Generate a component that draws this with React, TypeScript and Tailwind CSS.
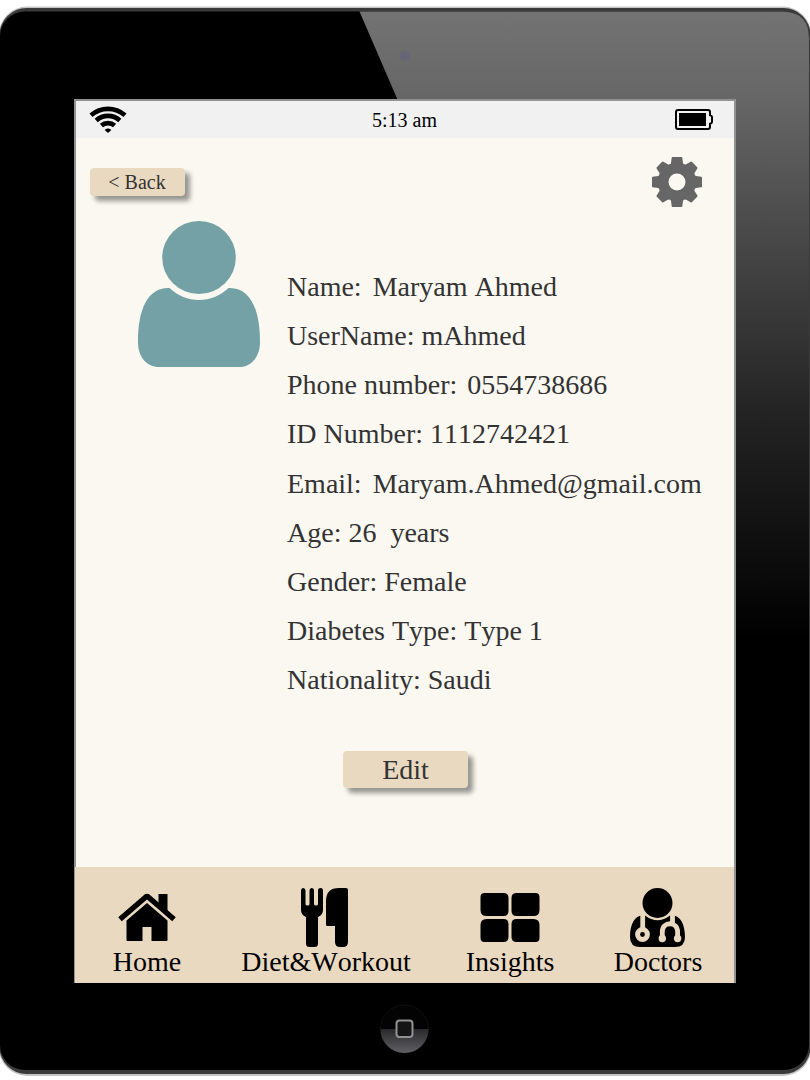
import type { ReactNode } from "react";

const details: [string, string, string][] = [
  ["Name:", "Maryam Ahmed", "ml-[11px]"],
  ["UserName:", "mAhmed", "ml-[7px]"],
  ["Phone number:", "0554738686", "ml-[10px]"],
  ["ID Number:", "1112742421", "ml-[7px]"],
  ["Email:", "Maryam.Ahmed@gmail.com", "ml-[11px]"],
  ["Age:", "26  years", "ml-[7px]"],
  ["Gender:", "Female", "ml-[7px]"],
  ["Diabetes Type:", "Type 1", "ml-[7px]"],
  ["Nationality:", "Saudi", "ml-[7px]"],
];

function WifiIcon() {
  return (
    <svg className="h-[27px] w-[38px]" viewBox="0 0 38 27" fill="none" stroke="#000" strokeWidth="4.7">
      <path d="M2 9.200C11.800.7 26.200.7 36 9.200" />
      <path d="M7.200 14.400C14 8.400 24 8.400 30.800 14.400" />
      <path d="M12.400 19.600C16.100 16.300 21.900 16.300 25.600 19.600" />
      <path d="M19 27l-3.300-2.900c1.900-2 4.700-2 6.600 0z" fill="#000" stroke="none" />
    </svg>
  );
}

function BatteryIcon() {
  return (
    <svg className="h-[21px] w-[38px]" viewBox="0 0 38 21">
      <path
        d="M3 1H33Q35 1 35 3V6.2Q37 6.6 37 8V13Q37 14.4 35 14.8V18Q35 20 33 20H3Q1 20 1 18V3Q1 1 3 1Z"
        fill="none"
        stroke="#000"
        strokeWidth="2"
      />
      <path d="M4 4h27v13H4z" />
    </svg>
  );
}

function GearIcon() {
  const angles = [0, 45, 90, 135, 180, 225, 270, 315];
  return (
    <svg className="h-[50px] w-[50px]" viewBox="-25 -25 50 50" fill="#666">
      {angles.map((a) => (
        <path
          key={a}
          transform={`rotate(${a})`}
          d={
            a % 90 === 0
              ? "M-4.4-25H4.4Q5.200-25 5.300-24.200L6-19Q6.300-18 7.500-17.300L6-12H-6L-7.500-17.300Q-6.300-18-6-19L-5.300-24.200Q-5.200-25-4.400-25Z"
              : "M-3.800-24.800H3.800Q4.500-24.800 4.800-24L6-19Q6.300-18 7.500-17.300L6-12H-6L-7.500-17.300Q-6.300-18-6-19L-4.800-24Q-4.500-24.800-3.800-24.800Z"
          }
        />
      ))}
      <circle r="13.6" fill="none" stroke="#666" strokeWidth="10.2" />
    </svg>
  );
}

function AvatarIcon() {
  return (
    <svg className="h-[146px] w-[122px]" viewBox="138 221 122 146" fill="#73a1a5">
      <ellipse cx="199" cy="257.5" rx="36.8" ry="36.5" />
      <path d="M169.5 288C178 296 188 300 199 300S220 296 228.500 288C249 287 260 307 260 342C260 357 251 367 239 367H159C147 367 138 357 138 342C138 307 149 287 169.500 288Z" />
    </svg>
  );
}

function HomeIcon() {
  return (
    <svg className="h-[60px] w-[60px]" viewBox="117.500 888 60 60">
      <path
        d="M120.500 919.200L146 897.200Q147.500 896 149 897.200L174.500 919.200"
        fill="none"
        stroke="#000"
        strokeWidth="5.400"
        strokeLinejoin="round"
      />
      <path d="M159 894H168V912L159 904Z" />
      <path d="M127 920.500L147.500 903L168 920.500V940Q168 941 167 941H152V927H143V941H128Q127 941 127 940Z" />
    </svg>
  );
}

function DietIcon() {
  return (
    <svg className="h-[60px] w-[50px]" viewBox="301 888 50 60">
      <path d="M301 890.500Q301 888 303.200 888T305.500 890.500V904Q305.500 905.500 307.500 905.500T309.500 904V890.500Q309.500 888 311.800 888T314 890.500V904Q314 905.500 316 905.500T318 904V890.500Q318 888 320.500 888T323 890.500V910Q323 915 318 917V943.500Q318 947 314.500 947H309.500Q306 947 306 943.500V917Q301 915 301 910Z" />
      <path d="M326 901Q326 888 339 888H346Q348 888 348 890V942Q348 947 343 947H340Q335 947 335 942V926H327.500Q326 926 326 924.500Z" />
    </svg>
  );
}

function InsightsIcon() {
  return (
    <svg className="h-[60px] w-[60px]" viewBox="480.500 888 60 60">
      <path d="M485 893H504Q509 893 509 898V911Q509 916 504 916H487Q481 916 481 910V897Q481 893 485 893ZM517 893H536Q540 893 540 897V910Q540 916 534 916H517Q512 916 512 911V898Q512 893 517 893ZM487 919H504Q509 919 509 924V937Q509 942 504 942H485Q481 942 481 938V925Q481 919 487 919ZM517 919H534Q540 919 540 925V938Q540 942 536 942H517Q512 942 512 937V924Q512 919 517 919Z" />
    </svg>
  );
}

function DoctorsIcon() {
  return (
    <svg className="h-[60px] w-[60px]" viewBox="628 888 60 60">
      <circle cx="657.500" cy="903" r="15" />
      <path d="M645 915.500Q657.500 925 670 915.500C680 914 685 924 685 937Q685 947 675 947H640Q630 947 630 937C630 924 635 914 645 915.500Z" />
      <g fill="none" stroke="#ead9c1">
        <path d="M642.700 914V928" strokeWidth="4.800" />
        <circle cx="642.500" cy="934.500" r="4.900" strokeWidth="5" />
        <path d="M672.500 913V923M662.300 938V932C662.300 921 677.600 921 677.600 932V938" strokeWidth="4.800" />
      </g>
      <circle cx="662.300" cy="938.500" r="3.700" fill="#ead9c1" />
      <circle cx="677.600" cy="938.500" r="3.700" fill="#ead9c1" />
    </svg>
  );
}

function NavItem({ label, className, children }: { label: string; className: string; children: ReactNode }) {
  return (
    <button className={`flex shrink-0 flex-col items-center text-[28px] leading-[28px] text-black ${className}`}>
      {children}
      <span className="whitespace-nowrap">{label}</span>
    </button>
  );
}

function Bezel() {
  return (
    <svg className="absolute inset-0 h-[1080px] w-[810px]" viewBox="0 0 810 1080">
      <defs>
        <linearGradient id="glare" gradientUnits="userSpaceOnUse" x1="0" y1="10" x2="0" y2="640">
          <stop offset="0" stopColor="#737373" />
          <stop offset="0.14" stopColor="#666" />
          <stop offset="0.34" stopColor="#4b4b4b" />
          <stop offset="0.65" stopColor="#222" />
          <stop offset="1" stopColor="#000" />
        </linearGradient>
        <linearGradient id="homeKey" x1="0" y1="0" x2="0" y2="1">
          <stop offset="0" stopColor="#29292b" />
          <stop offset="1" stopColor="#606064" />
        </linearGradient>
      </defs>
      <rect x="-1" y="6.500" width="812" height="1069.500" rx="28" fill="#c4c4c4" />
      <rect x="-0.500" y="8" width="811" height="1066" rx="27" fill="#3a3a3a" />
      <rect x="0" y="11.500" width="809" height="1058.500" rx="25" fill="#000" />
      <path d="M359.500 11.500H784Q809 13 809 38V640H730V110H402Z" fill="url(#glare)" />
      <circle cx="404.500" cy="56" r="5" fill="#66647a" opacity="0.75" />
      <circle cx="404.500" cy="56" r="2" fill="#666380" />
      <circle cx="404.500" cy="1029" r="24" fill="#030303" stroke="#101010" />
      <path d="M380.500 1029H428.500A24 24 0 0 1 380.500 1029Z" fill="url(#homeKey)" />
      <rect x="396.500" y="1020.500" width="16" height="16.500" rx="3" fill="#151515" stroke="#929292" strokeWidth="2" />
    </svg>
  );
}

export default function App() {
  return (
    <div className="relative h-[1080px] w-[810px] overflow-hidden bg-white pt-[99px] font-['Liberation_Serif',serif] text-[#333] [font-kerning:none]">
      <Bezel />
      <main className="relative ml-[74px] flex h-[884px] w-[662px] flex-col border-x-2 border-t-2 border-[#929292] bg-[#fbf8f1]">
        <header className="grid h-[37px] shrink-0 grid-cols-3 items-center bg-[#f1f1f1] pr-[21px] pl-[13px] text-xl text-black">
          <WifiIcon />
          <span className="ml-[7px] text-center leading-[22px]">5:13 am</span>
          <span className="justify-self-end">
            <BatteryIcon />
          </span>
        </header>
        <div className="flex h-[69px] shrink-0 items-start justify-between pr-8 pl-[14px]">
          <button className="mt-[30px] h-7 w-[95px] rounded-[4px] bg-[#ead9c1] pr-px text-xl leading-7 shadow-[5px_5px_5px_rgba(0,0,0,0.4)]">
            &lt; Back
          </button>
          <button className="mt-[19px]">
            <GearIcon />
          </button>
        </div>
        <section className="flex h-[544px] shrink-0 items-start pl-[62px]">
          <div className="mt-[14px] shrink-0">
            <AvatarIcon />
          </div>
          <dl className="mt-[55.2px] ml-[27px] text-[28px]">
            {details.map(([label, value, gap]) => (
              <div key={label} className="flex h-[49.2px] items-center whitespace-pre">
                <dt>{label}</dt>
                <dd className={gap}>{value}</dd>
              </div>
            ))}
          </dl>
        </section>
        <div className="flex flex-1 items-start pl-[267px]">
          <button className="h-[37px] w-[125px] rounded-[4px] bg-[#ead9c1] text-[28px] leading-[37px] shadow-[5px_5px_5px_rgba(0,0,0,0.4)]">
            Edit
          </button>
        </div>
        <nav className="-ml-px flex h-[116px] shrink-0 items-start bg-[#ead9c1] pt-[21px] pl-[38px]">
          <NavItem label="Home" className="w-[68px]">
            <HomeIcon />
          </NavItem>
          <NavItem label="Diet&Workout" className="ml-[60px] w-[170px]">
            <DietIcon />
          </NavItem>
          <NavItem label="Insights" className="ml-[55px] w-[88px]">
            <InsightsIcon />
          </NavItem>
          <NavItem label="Doctors" className="ml-[60px] w-[88px]">
            <DoctorsIcon />
          </NavItem>
        </nav>
      </main>
    </div>
  );
}
